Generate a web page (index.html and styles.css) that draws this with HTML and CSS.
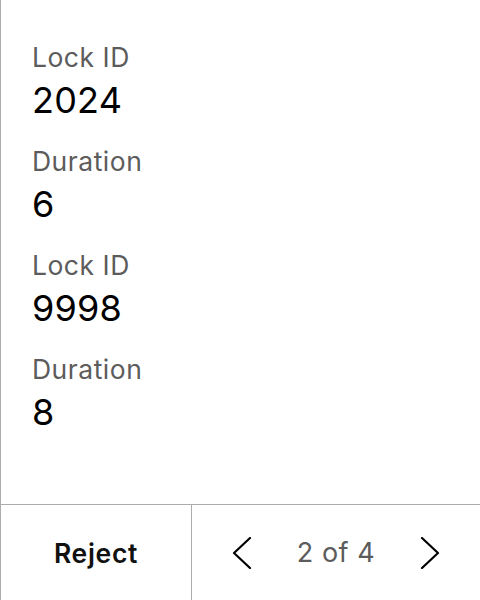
FILE: index.html
```html
<!DOCTYPE html>
<html lang="en">
<head>
<meta charset="utf-8">
<link rel="stylesheet" href="styles.css">
</head>
<body>
<div class="panel">
  <div class="content">
    <div class="field">
      <div class="label">Lock ID</div>
      <div class="value">2024</div>
    </div>
    <div class="field">
      <div class="label">Duration</div>
      <div class="value">6</div>
    </div>
    <div class="field">
      <div class="label">Lock ID</div>
      <div class="value">9998</div>
    </div>
    <div class="field">
      <div class="label">Duration</div>
      <div class="value">8</div>
    </div>
  </div>
  <div class="footer">
    <div class="reject">Reject</div>
    <div class="pager">
      <svg class="chev" width="32" height="32" viewBox="0 0 32 32"><path d="M24 1 L8 16 L24 31" fill="none" stroke="#000" stroke-width="2.2" stroke-linecap="round" stroke-linejoin="round"/></svg>
      <span class="count">2 of 4</span>
      <svg class="chev" width="32" height="32" viewBox="0 0 32 32"><path d="M8 1 L24 16 L8 31" fill="none" stroke="#000" stroke-width="2.2" stroke-linecap="round" stroke-linejoin="round"/></svg>
    </div>
  </div>
</div>
</body>
</html>
```

FILE: styles.css
```css
* { box-sizing: border-box; }
html, body { margin: 0; padding: 0; background: #fff; }
body { font-family: Inter, "Noto Sans", sans-serif; }
.panel {
  width: 480px;
  height: 600px;
  border-left: 1px solid #ababab;
  display: flex;
  flex-direction: column;
}
.content {
  flex: 1;
  padding: 39px 0 0 31px;
}
.field { margin-bottom: 21px; }
.label {
  font-size: 26.5px;
  line-height: 36px;
  letter-spacing: 0.5px;
  color: #5c5c5c;
  margin-bottom: 3px;
}
.value {
  font-size: 36px;
  line-height: 44px;
  letter-spacing: 0.2px;
  color: #000;
}
.footer {
  height: 96px;
  border-top: 1px solid #ababab;
  display: flex;
}
.reject {
  width: 191px;
  border-right: 1px solid #ababab;
  display: flex;
  align-items: center;
  justify-content: center;
  font-size: 26.5px;
  letter-spacing: 0.7px;
  font-weight: 600;
  color: #111;
}
.pager {
  flex: 1;
  display: flex;
  align-items: center;
  justify-content: space-between;
  padding: 0 34px;
}
.chev { display: block; }
.count {
  font-size: 27px;
  letter-spacing: 0.5px;
  color: #5c5c5c;
}
```
